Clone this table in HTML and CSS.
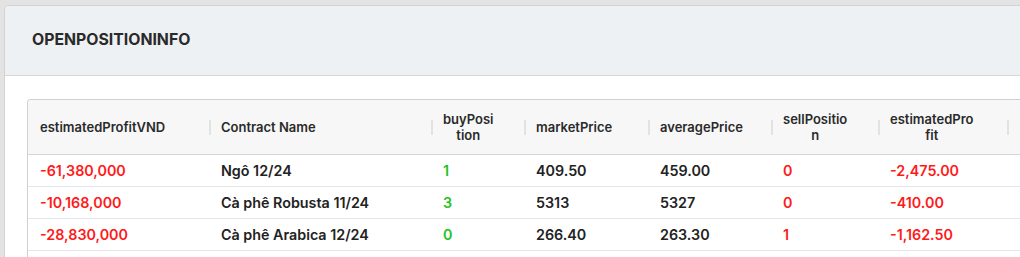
FILE: index.html
```html
<!DOCTYPE html>
<html lang="vi">
<head>
<meta charset="utf-8">
<title>Open Position Info</title>
<link rel="stylesheet" href="styles.css">
</head>
<body>
<div class="page">
  <section class="card">
    <header class="card-head">
      <h2 class="card-title">OPENPOSITIONINFO</h2>
    </header>
    <div class="card-body">
      <div class="table-wrap">
        <table class="grid">
          <colgroup>
            <col class="c1"><col class="c2"><col class="c3"><col class="c4"><col class="c5"><col class="c6"><col class="c7"><col class="c8">
          </colgroup>
          <thead>
            <tr>
              <th>estimatedProfitVND</th>
              <th>Contract Name</th>
              <th><span class="wrapped">buyPosi<br>tion</span></th>
              <th>marketPrice</th>
              <th>averagePrice</th>
              <th><span class="wrapped">sellPositio<br>n</span></th>
              <th><span class="wrapped">estimatedPro<br>fit</span></th>
              <th></th>
            </tr>
          </thead>
          <tbody>
            <tr>
              <td class="neg">-61,380,000</td>
              <td>Ngô 12/24</td>
              <td class="pos">1</td>
              <td>409.50</td>
              <td>459.00</td>
              <td class="neg">0</td>
              <td class="neg">-2,475.00</td>
              <td></td>
            </tr>
            <tr>
              <td class="neg">-10,168,000</td>
              <td>Cà phê Robusta 11/24</td>
              <td class="pos">3</td>
              <td>5313</td>
              <td>5327</td>
              <td class="neg">0</td>
              <td class="neg">-410.00</td>
              <td></td>
            </tr>
            <tr>
              <td class="neg">-28,830,000</td>
              <td>Cà phê Arabica 12/24</td>
              <td class="pos">0</td>
              <td>266.40</td>
              <td>263.30</td>
              <td class="neg">1</td>
              <td class="neg">-1,162.50</td>
              <td></td>
            </tr>
            <tr class="spacer">
              <td></td><td></td><td></td><td></td><td></td><td></td><td></td><td></td>
            </tr>
          </tbody>
        </table>
      </div>
    </div>
  </section>
</div>
</body>
</html>
```

FILE: styles.css
```css
html, body {
  margin: 0;
  padding: 0;
  background: #e3e3e3;
  overflow: hidden;
}

body {
  font-family: Inter, "Liberation Sans", Arial, sans-serif;
  color: #222;
}

.page {
  padding: 5px 0 0 4px;
}

.card {
  width: 1100px;
  background: #fff;
  border: 1px solid #d3d3d3;
  border-right: none;
  border-radius: 5px 0 0 0;
  overflow: hidden;
}

.card-head {
  height: 69px;
  background: #eef1f4;
  border-bottom: 1px solid #d6d9dc;
  display: flex;
  align-items: center;
  padding-left: 27px;
}

.card-title {
  margin: 0 0 2px;
  font-size: 15.8px;
  font-weight: 700;
  color: #2a2a2a;
  letter-spacing: 0;
}

.card-body {
  padding: 23px 0 0 22px;
}

.table-wrap {
  border: 1px solid #cdd1d6;
  border-right: none;
  border-bottom: none;
  border-radius: 4px 0 0 0;
  overflow: hidden;
}

.grid {
  table-layout: fixed;
  border-collapse: separate;
  border-spacing: 0;
  width: 1120px;
}

.c1 { width: 181px; }
.c2 { width: 222px; }
.c3 { width: 93px; }
.c4 { width: 124px; }
.c5 { width: 123px; }
.c6 { width: 107px; }
.c7 { width: 129px; }
.c8 { width: 141px; }

.grid th {
  position: relative;
  height: 54px;
  background: #f7f7f7;
  border-bottom: 1px solid #d4d8dd;
  padding: 0 12px;
  text-align: left;
  font-size: 13px;
  font-weight: 600;
  color: #2a2a2a;
  line-height: 16px;
  white-space: nowrap;
}

.grid th + th::before {
  content: "";
  position: absolute;
  left: 0;
  top: 50%;
  width: 2px;
  height: 15px;
  margin-top: -7px;
  background: #e2e2e2;
}

.wrapped {
  display: inline-block;
  text-align: center;
}

.grid td {
  height: 31px;
  padding: 0 12px;
  border-bottom: 1px solid #e3e7ed;
  font-size: 14.3px;
  font-weight: 600;
  color: #222;
  white-space: nowrap;
}

.grid .spacer td {
  height: 10px;
  border-bottom: none;
}

.grid td.neg { color: #ff1a1a; }
.grid td.pos { color: #1fc41f; }
```
